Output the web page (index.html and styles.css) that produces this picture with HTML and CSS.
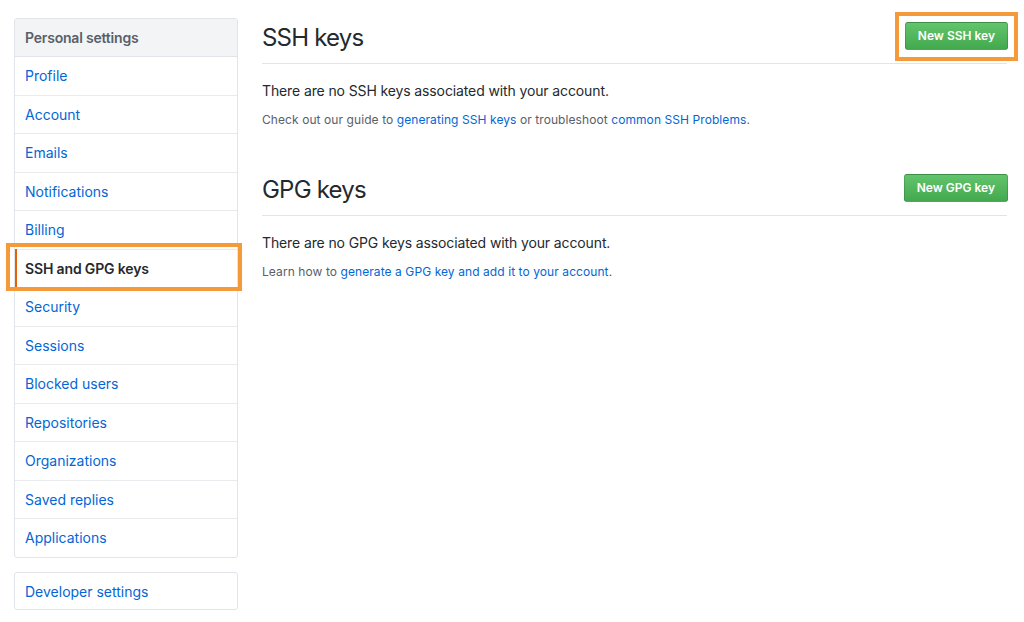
FILE: index.html
```html
<!DOCTYPE html>
<html lang="en">
<head>
<meta charset="utf-8">
<title>SSH and GPG keys</title>
<link rel="stylesheet" href="styles.css">
</head>
<body>
<div class="page">
  <aside class="sidebar">
    <nav class="menu">
      <div class="menu-heading">Personal settings</div>
      <a class="menu-item" href="#">Profile</a>
      <a class="menu-item" href="#">Account</a>
      <a class="menu-item" href="#">Emails</a>
      <a class="menu-item" href="#">Notifications</a>
      <a class="menu-item" href="#">Billing</a>
      <a class="menu-item selected" href="#">SSH and GPG keys<span class="highlight"></span></a>
      <a class="menu-item" href="#">Security</a>
      <a class="menu-item" href="#">Sessions</a>
      <a class="menu-item" href="#">Blocked users</a>
      <a class="menu-item" href="#">Repositories</a>
      <a class="menu-item" href="#">Organizations</a>
      <a class="menu-item" href="#">Saved replies</a>
      <a class="menu-item" href="#">Applications</a>
    </nav>
    <nav class="menu menu-dev">
      <a class="menu-item" href="#">Developer settings</a>
    </nav>
  </aside>
  <main class="content">
    <section class="section">
      <div class="subhead">
        <h2 class="subhead-heading">SSH keys</h2>
        <a class="btn" href="#">New SSH key<span class="highlight-btn"></span></a>
      </div>
      <p class="blank">There are no SSH keys associated with your account.</p>
      <p class="note">Check out our guide to <a href="#">generating SSH keys</a> or troubleshoot <a href="#">common SSH Problems</a>.</p>
    </section>
    <section class="section section-gpg">
      <div class="subhead">
        <h2 class="subhead-heading">GPG keys</h2>
        <a class="btn" href="#">New GPG key</a>
      </div>
      <p class="blank">There are no GPG keys associated with your account.</p>
      <p class="note">Learn how to <a href="#">generate a GPG key and add it to your account</a>.</p>
    </section>
  </main>
</div>
</body>
</html>
```
FILE: styles.css
```css
* { box-sizing: border-box; }
html, body { margin: 0; padding: 0; background: #fff; }
body {
  font-family: Inter, "Liberation Sans", sans-serif;
  font-size: 14px;
  color: #24292e;
}
a { color: #0366d6; text-decoration: none; }
.page {
  display: flex;
  gap: 24px;
  padding: 18px 17px 0 14px;
}
.sidebar { width: 224px; flex: none; }
.menu {
  border: 1px solid #e1e4e8;
  border-radius: 3px;
  background: #fff;
}
.menu-heading {
  background: #f3f4f6;
  color: #586069;
  font-weight: 600;
  font-size: 14px;
  letter-spacing: -0.2px;
  padding: 8px 10px;
  line-height: 21px;
  border-bottom: 1px solid #e1e4e8;
  border-radius: 3px 3px 0 0;
}
.menu-item {
  display: block;
  position: relative;
  padding: 8px 10px;
  line-height: 21.5px;
  border-bottom: 1px solid #e8eaed;
}
.menu-item:last-child { border-bottom: 0; }
.menu-item.selected {
  color: #24292e;
  font-weight: 600;
  letter-spacing: -0.15px;
}
.menu-item.selected::before {
  content: "";
  position: absolute;
  left: 0; top: -1px; bottom: 0;
  width: 2px;
  background: #e36209;
}
.highlight {
  position: absolute;
  left: -9px; right: -5px; top: -7px; bottom: -4px;
  border: 4px solid #f49a3b;
}
.menu-dev { margin-top: 14px; }
.menu-dev .menu-item { padding: 8px 10px 6px; line-height: 22px; }
.content { flex: 1; min-width: 0; padding-top: 2px; }
.subhead {
  display: flex;
  align-items: flex-start;
  justify-content: space-between;
  padding-bottom: 7px;
  border-bottom: 1px solid #e1e4e8;
}
.subhead-heading {
  margin: 0;
  font-size: 24px;
  font-weight: 400;
  line-height: 36px;
  letter-spacing: -0.8px;
}
.btn {
  position: relative;
  display: inline-block;
  margin-top: 2px;
  padding: 3px 12px;
  font-size: 12px;
  font-weight: 600;
  line-height: 20px;
  color: #fff;
  background: linear-gradient(#62c46c, #43a94e);
  border: 1px solid rgba(27,31,35,0.18);
  border-radius: 3px;
  margin-right: -1px;
}
.highlight-btn {
  position: absolute;
  left: -11px; right: -11px; top: -11px; bottom: -12px;
  border: 4px solid #f49a3b;
}
.blank {
  margin: 16px 0 0;
  font-size: 14px;
  line-height: 22px;
  letter-spacing: -0.12px;
}
.note {
  margin: 8px 0 0;
  font-size: 12px;
  line-height: 20px;
  color: #586069;
  letter-spacing: 0.08px;
}
.section-gpg { margin-top: 42px; }
```
